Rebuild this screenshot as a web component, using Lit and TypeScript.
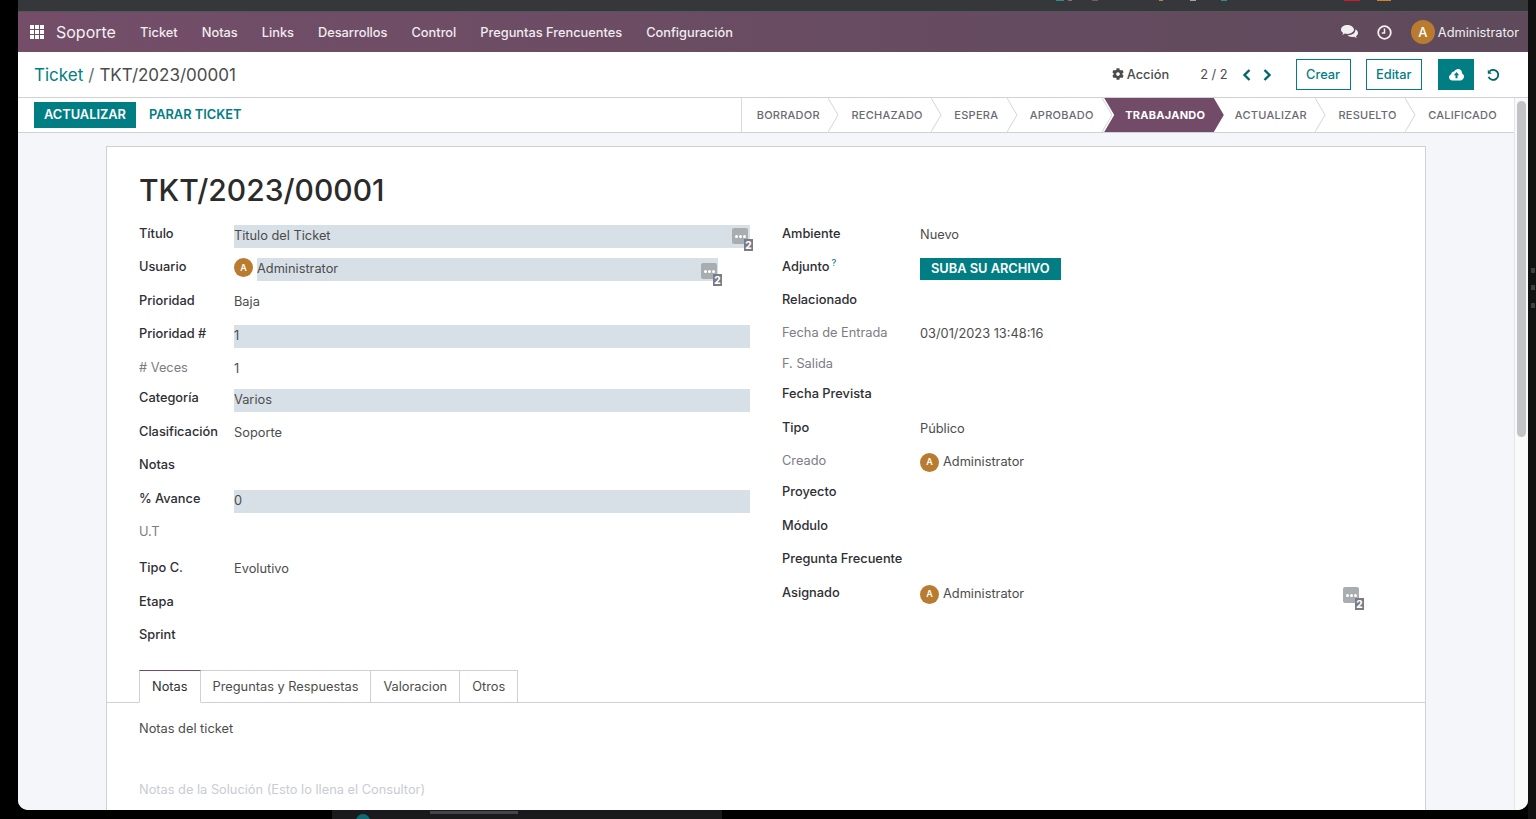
import { LitElement, html, css, svg } from "lit";
import { customElement } from "lit/decorators.js";

const av = (big = false) => html`<span class="avatar ${big ? "big" : ""}">A</span>`;
const msg = html`<span class="msg"><i></i><i></i><i></i><b>2</b></span>`;

type Row = { h: number; label: string; muted?: boolean; sup?: boolean; kind?: string; value?: string };

const left: Row[] = [
  { h: 33, label: "Título", kind: "input-msg", value: "Titulo del Ticket" },
  { h: 34, label: "Usuario", kind: "user-input" },
  { h: 33, label: "Prioridad", kind: "text", value: "Baja" },
  { h: 34, label: "Prioridad #", kind: "input", value: "1" },
  { h: 30, label: "# Veces", muted: true, kind: "text", value: "1" },
  { h: 34, label: "Categoría", kind: "input", value: "Varios" },
  { h: 33, label: "Clasificación", kind: "text", value: "Soporte" },
  { h: 34, label: "Notas" },
  { h: 33, label: "% Avance", kind: "input", value: "0" },
  { h: 36, label: "U.T", muted: true },
  { h: 34, label: "Tipo C.", kind: "text", value: "Evolutivo" },
  { h: 33, label: "Etapa" },
  { h: 33, label: "Sprint" },
];
const right: Row[] = [
  { h: 33, label: "Ambiente", kind: "text", value: "Nuevo" },
  { h: 33, label: "Adjunto", sup: true, kind: "upload" },
  { h: 33, label: "Relacionado" },
  { h: 31, label: "Fecha de Entrada", muted: true, kind: "text", value: "03/01/2023 13:48:16" },
  { h: 30, label: "F. Salida", muted: true },
  { h: 34, label: "Fecha Prevista" },
  { h: 33, label: "Tipo", kind: "text", value: "Público" },
  { h: 31, label: "Creado", muted: true, kind: "user" },
  { h: 34, label: "Proyecto" },
  { h: 33, label: "Módulo" },
  { h: 34, label: "Pregunta Frecuente" },
  { h: 33, label: "Asignado", kind: "user-msg" },
];

const stages = ["BORRADOR", "RECHAZADO", "ESPERA", "APROBADO", "TRABAJANDO", "ACTUALIZAR", "RESUELTO", "CALIFICADO"];
const menus = ["Ticket", "Notas", "Links", "Desarrollos", "Control", "Preguntas Frencuentes", "Configuración"];
const tabs = ["Notas", "Preguntas y Respuestas", "Valoracion", "Otros"];
const specks = [
  [1056, "#2c8f96", 8], [1068, "#8a6a78", 4], [1092, "#7a5a6a", 6], [1159, "#b08a3a", 4],
  [1190, "#a8a0a8", 6], [1221, "#2c8f96", 6], [1344, "#d0182f", 16], [1377, "#c8862c", 14],
];

@customElement("app-root")
export class AppRoot extends LitElement {
  static styles = css`
    :host { display: block; position: relative; height: 819px; background: #000; overflow: hidden;
      font-family: Inter, "Noto Sans", sans-serif; font-size: 12.8px; color: #4c4c4c; }
    * { box-sizing: border-box; }
    .right-edge { position: absolute; left: 1528px; top: 0; width: 8px; height: 819px; background: #111; }
    .right-edge span { position: absolute; left: 3px; width: 4px; height: 5px; background: #777; opacity: .45; }
    .bottom-frag { position: absolute; left: 332px; top: 810px; width: 390px; height: 9px; background: #1a1a1c; overflow: hidden; }
    .bottom-frag i { position: absolute; left: 24px; top: 4px; width: 14px; height: 14px; border-radius: 50%; background: #0e6a70; }
    .bottom-frag span { position: absolute; left: 98px; top: 1px; width: 88px; height: 3px; background: #666a70; opacity: .55; }
    .window { position: absolute; left: 18px; top: 0; width: 1510px; height: 810px; background: #fff;
      border-radius: 0 0 10px 10px; overflow: hidden; display: flex; flex-direction: column; }
    .strip { height: 12px; flex: none; background: #36373b; border-bottom: 1px solid #55565a; position: relative; }
    .strip i { position: absolute; top: 0; height: 1px; }
    nav { height: 40px; flex: none; display: flex; align-items: center; color: #fff; padding-left: 12px;
      background: linear-gradient(90deg, #744e69, #5e4a5b); }
    .apps { width: 14px; height: 14px; display: grid; grid-template-columns: repeat(3, 4px); gap: 1px; margin-right: 12px; }
    .apps i { background: #fff; }
    .brand { font-size: 16px; margin-right: 23px; opacity: .92; width: 61px; white-space: nowrap; }
    .menu { display: flex; gap: 24px; font-weight: 500; color: #f0ecef; }
    .sys { margin-left: auto; display: flex; align-items: center; padding-right: 9px; color: #f2eff1; }
    .sys svg { display: block; }
    .sys .chat { margin-right: 19px; }
    .sys .clock { margin-right: 19px; }
    .avatar { display: inline-flex; align-items: center; justify-content: center; width: 19px; height: 19px; border-radius: 50%;
      background: #b97b2e; color: #fff; font-size: 9px; font-weight: 600; flex: none; }
    .avatar.big { width: 24px; height: 24px; font-size: 13px; font-weight: 500; margin-right: 3px; }
    .crumb { height: 46px; flex: none; display: flex; align-items: center; padding: 0 29px 0 16px; border-bottom: 1px solid #cfd1d6; }
    .bc { font-size: 17px; color: #4c4c4c; white-space: nowrap; }
    .bc a { color: #017e84; }
    .bc em { font-style: normal; margin: 0 5px; color: #6b6b6b; }
    .tools { margin-left: auto; display: flex; align-items: center; }
    .action { display: flex; align-items: center; gap: 3px; font-weight: 500; margin-right: 31px; padding-bottom: 1px; }
    .pager { margin-right: 14px; padding-bottom: 1px; }
    .chev { margin-right: 12px; display: block; }
    .chev.last { margin-right: 24px; }
    .btn { height: 31px; display: flex; align-items: center; padding: 0 9.5px; border: 1px solid #017e84; color: #017e84; font-weight: 500; }
    .btn.m { margin-left: 15px; }
    .btn.save { width: 36px; margin-left: 16px; background: #017e84; justify-content: center; padding: 0; }
    .undo { margin-left: 13px; display: block; }
    .body { flex: 1; min-height: 0; display: flex; }
    .main { flex: 1; min-width: 0; display: flex; flex-direction: column; background: #f5f6fa; }
    .status { height: 35px; flex: none; background: #fff; border-bottom: 1px solid #cfd1d6; display: flex; align-items: center; padding-left: 16px; }
    .status .primary { height: 26px; padding: 0 10px 1px; background: #017e84; color: #fff; font-weight: 600; display: flex; align-items: center; }
    .status .link { margin-left: 13px; padding-bottom: 1px; color: #017e84; font-weight: 600; }
    .stages { margin-left: auto; height: 34px; display: flex; border-left: 1px solid #d8dade; padding-left: 3px; }
    .stage { position: relative; display: flex; align-items: center; padding: 0 19.6px 0 12px; font-size: 11px; font-weight: 500;
      letter-spacing: .25px; color: #6a6a72; white-space: nowrap; }
    .stage:last-child { padding-right: 17px; }
    .stage svg { position: absolute; right: 0; top: 0; }
    .stage.on { color: #fff; font-weight: 700; z-index: 0; margin-right: -2px; }
    .stage.on::before { content: ""; position: absolute; z-index: -1; left: -9px; right: 1px; top: 0; bottom: 0; background: #714b67;
      clip-path: polygon(0 0, calc(100% - 10px) 0, 100% 50%, calc(100% - 10px) 100%, 0 100%, 10px 50%); }
    .bar { width: 14px; flex: none; background: #fafafa; border-left: 1px solid #e4e5e9; padding: 3px 2px 0; }
    .bar i { display: block; width: 9px; height: 336px; border-radius: 5px; background: #c2c3c6; }
    .area { flex: 1; min-height: 0; overflow: hidden; padding: 13px 88px 0 88px; }
    .sheet { background: #fff; border: 1px solid #cfd1d6; height: 800px; padding-top: 23px; }
    h1 { margin: 0 0 15px 32px; font-size: 30px; line-height: 40px; font-weight: 500; color: #2b2b2b; }
    .cols { display: grid; grid-template-columns: 611px 611px; gap: 32px; padding-left: 32px; }
    .row { display: grid; align-items: start; }
    .col-l .row { grid-template-columns: 95px 1fr; }
    .col-r .row { grid-template-columns: 138px 1fr; }
    .lab { line-height: 18px; font-weight: 500; color: #2e2e33; white-space: nowrap; }
    .lab.muted { color: #7c7c84; font-weight: 400; }
    .lab sup { font-size: 9px; color: #017e84; line-height: 0; margin-left: 2px; }
    .val { line-height: 20px; color: #4c4c4c; display: flex; align-items: center; gap: 4px; position: relative; white-space: nowrap; }
    .fill { display: block; position: relative; height: 22.5px; line-height: 21px; background: #d8e0e7; color: #4c4c4c; }
    .user { display: flex; position: relative; gap: 4px; }
    .user .fill { flex: none; width: 461px; }
    .upload { display: inline-block; height: 22px; line-height: 21px; padding: 0 11px; background: #017e84; color: #fff; font-weight: 600; }
    .msg { position: absolute; width: 16px; height: 16px; border-radius: 2px; background: #a9adb0; display: flex; align-items: center; justify-content: center; gap: 1px; }
    .msg i { width: 3px; height: 3px; border-radius: 50%; background: #fff; }
    .msg b { position: absolute; left: 12px; top: 11px; width: 9px; height: 12px; background: #7b7b83; color: #fff; font-size: 10px; line-height: 12px; text-align: center; font-weight: 800; }
    .input-msg .msg { right: 2px; top: 3px; }
    .user .msg { left: 467px; top: 5px; }
    .user-msg .msg { left: 423px; top: 3px; }
    .tabs { margin-top: 11px; height: 33px; display: flex; padding-left: 32px; border-bottom: 1px solid #cfd1d6; }
    .tab { height: 33px; padding: 0 12px; line-height: 32px; border: 1px solid #cfd1d6; border-left: 0; color: #4c4c4c; white-space: nowrap; }
    .tab.on { border-left: 1px solid #cfd1d6; border-top: 1px solid #714b67; border-bottom-color: #fff; color: #2e2e33; }
    .notes { padding: 16px 0 0 32px; line-height: 20px; }
    .ph { margin-top: 41px; color: #c9ccd4; }
  `;

  private field(r: Row) {
    switch (r.kind) {
      case "text": return html`<div class="val">${r.value}</div>`;
      case "input": return html`<div class="fill">${r.value}</div>`;
      case "input-msg": return html`<div class="fill input-msg">${r.value}${msg}</div>`;
      case "user-input": return html`<div class="user">${av()}<div class="fill">Administrator</div>${msg}</div>`;
      case "upload": return html`<div><span class="upload">SUBA SU ARCHIVO</span></div>`;
      case "user": return html`<div class="val">${av()}Administrator</div>`;
      case "user-msg": return html`<div class="val user-msg">${av()}Administrator${msg}</div>`;
      default: return html`<div></div>`;
    }
  }
  private rows(list: Row[]) {
    return list.map(
      (r) => html`<div class="row" style="height:${r.h}px">
        <div class="lab ${r.muted ? "muted" : ""}">${r.label}${r.sup ? html`<sup>?</sup>` : ""}</div>
        ${this.field(r)}
      </div>`
    );
  }

  render() {
    const chevStage = svg`<polyline points="0,0 10,17 0,34" fill="none" stroke="#d3d5da" stroke-width="1"/>`;
    return html`
      <div class="right-edge"><span style="top:268px"></span><span style="top:285px"></span><span style="top:303px"></span></div>
      <div class="bottom-frag"><i></i><span></span></div>
      <div class="window">
        <div class="strip">${specks.map(([x, c, w]) => html`<i style="left:${(x as number) - 18}px;background:${c};width:${w}px"></i>`)}</div>
        <nav>
          <div class="apps">${Array.from({ length: 9 }, () => html`<i></i>`)}</div>
          <div class="brand">Soporte</div>
          <div class="menu">${menus.map((m) => html`<span>${m}</span>`)}</div>
          <div class="sys">
            <svg class="chat" width="17" height="14" viewBox="0 0 17 14" fill="currentColor">
              <path d="M6.5 0C2.9 0 0 2 0 4.6c0 1.4.9 2.7 2.2 3.5-.2.7-.6 1.3-1 1.8 1-.2 2-.7 2.7-1.3.8.2 1.7.3 2.6.3 3.6 0 6.5-2 6.5-4.3S10.100 0 6.500 0z"/>
              <path d="M14.300 4.200c.1.300.1.600.1.900 0 3-3.200 5.200-7.100 5.200h-.8c1 1 2.700 1.700 4.600 1.700.7 0 1.300-.1 1.900-.2.800.6 1.800 1.100 2.900 1.300-.4-.5-.8-1.100-1-1.800 1.300-.8 2.100-2 2.100-3.300 0-1.600-1-3-2.700-3.800z"/>
            </svg>
            <svg class="clock" width="15" height="15" viewBox="0 0 15 15" fill="none" stroke="currentColor" stroke-width="1.800">
              <circle cx="7.500" cy="7.500" r="6.300"/><polyline points="7.500,3.500 7.500,8 4.800,8" stroke-width="1.500"/>
            </svg>
            ${av(true)}<span>Administrator</span>
          </div>
        </nav>
        <div class="crumb">
          <div class="bc"><a>Ticket</a><em>/</em>TKT/2023/00001</div>
          <div class="tools">
            <div class="action">
              <svg width="12" height="12" viewBox="0 0 512 512" fill="#4c4c4c"><path d="M487.400 315.700l-42.600-24.600c4.300-23.200 4.300-47 0-70.200l42.600-24.600c4.900-2.800 7.100-8.600 5.500-14-11.100-35.600-30-67.800-54.700-94.600-3.800-4.100-10-5.100-14.800-2.300L380.800 110c-17.900-15.400-38.500-27.300-60.800-35.100V25.800c0-5.600-3.900-10.500-9.400-11.700-36.700-8.200-74.300-7.800-109.200 0-5.500 1.200-9.400 6.100-9.400 11.700V75c-22.200 7.900-42.800 19.800-60.800 35.100L88.700 85.500c-4.900-2.800-11-1.900-14.800 2.300-24.700 26.700-43.600 58.900-54.700 94.600-1.700 5.400.6 11.200 5.500 14L67.300 221c-4.300 23.200-4.300 47 0 70.200l-42.600 24.600c-4.900 2.800-7.100 8.600-5.500 14 11.100 35.600 30 67.800 54.700 94.600 3.800 4.100 10 5.100 14.800 2.300l42.600-24.600c17.900 15.400 38.500 27.300 60.800 35.100v49.200c0 5.600 3.900 10.500 9.400 11.700 36.700 8.200 74.300 7.800 109.200 0 5.500-1.200 9.400-6.100 9.400-11.700v-49.200c22.200-7.900 42.800-19.800 60.800-35.100l42.600 24.600c4.900 2.800 11 1.900 14.800-2.300 24.700-26.700 43.600-58.900 54.700-94.600 1.500-5.500-.7-11.300-5.600-14.100zM256 336c-44.100 0-80-35.900-80-80s35.900-80 80-80 80 35.900 80 80-35.900 80-80 80z"/></svg>
              <span>Acción</span>
            </div>
            <span class="pager">2 / 2</span>
            <svg class="chev" width="9" height="12" viewBox="0 0 9 12" fill="none" stroke="#01666b" stroke-width="2.400"><polyline points="7.500,1 2.500,6 7.500,11"/></svg>
            <svg class="chev last" width="9" height="12" viewBox="0 0 9 12" fill="none" stroke="#01666b" stroke-width="2.400"><polyline points="1.500,1 6.500,6 1.500,11"/></svg>
            <div class="btn">Crear</div>
            <div class="btn m">Editar</div>
            <div class="btn save">
              <svg width="15" height="12" viewBox="0 0 15 12"><path fill="#fff" d="M3.500 11.500C1.500 11.500 0 10.100 0 8.300c0-1.400.9-2.600 2.200-3C2.300 3.700 3.600 2.500 5.200 2.600 6 1 7.400 0 9 0c2.200 0 4 1.700 4 3.900v.6c1.200.5 2 1.700 2 3 0 2.200-1.700 4-3.900 4z"/><path fill="#017e84" d="M7.500 3 4.800 6.200h1.700v3h2v-3h1.700z"/></svg>
            </div>
            <svg class="undo" width="12" height="12" viewBox="0 0 12 12" fill="none" stroke="#01666b" stroke-width="1.800"><path d="M2.500 2.500A5 5 0 1 1 1.600 7.800"/><path d="M.8.800l4 3.900H.8z" fill="#01666b" stroke="none"/></svg>
          </div>
        </div>
        <div class="body">
          <div class="main">
            <div class="status">
              <div class="primary">ACTUALIZAR</div>
              <div class="link">PARAR TICKET</div>
              <div class="stages">
                ${stages.map((s, i) => html`<div class="stage ${s === "TRABAJANDO" ? "on" : ""}">${s}
                  ${i < stages.length - 1 && s !== "TRABAJANDO" ? html`<svg width="11" height="34" viewBox="0 0 11 34">${chevStage}</svg>` : ""}</div>`)}
              </div>
            </div>
            <div class="area">
              <div class="sheet">
                <h1>TKT/2023/00001</h1>
                <div class="cols">
                  <div class="col-l">${this.rows(left)}</div>
                  <div class="col-r">${this.rows(right)}</div>
                </div>
                <div class="tabs">${tabs.map((t, i) => html`<div class="tab ${i === 0 ? "on" : ""}">${t}</div>`)}</div>
                <div class="notes"><div>Notas del ticket</div><div class="ph">Notas de la Solución (Esto lo llena el Consultor)</div></div>
              </div>
            </div>
          </div>
          <div class="bar"><i></i></div>
        </div>
      </div>
    `;
  }
}
